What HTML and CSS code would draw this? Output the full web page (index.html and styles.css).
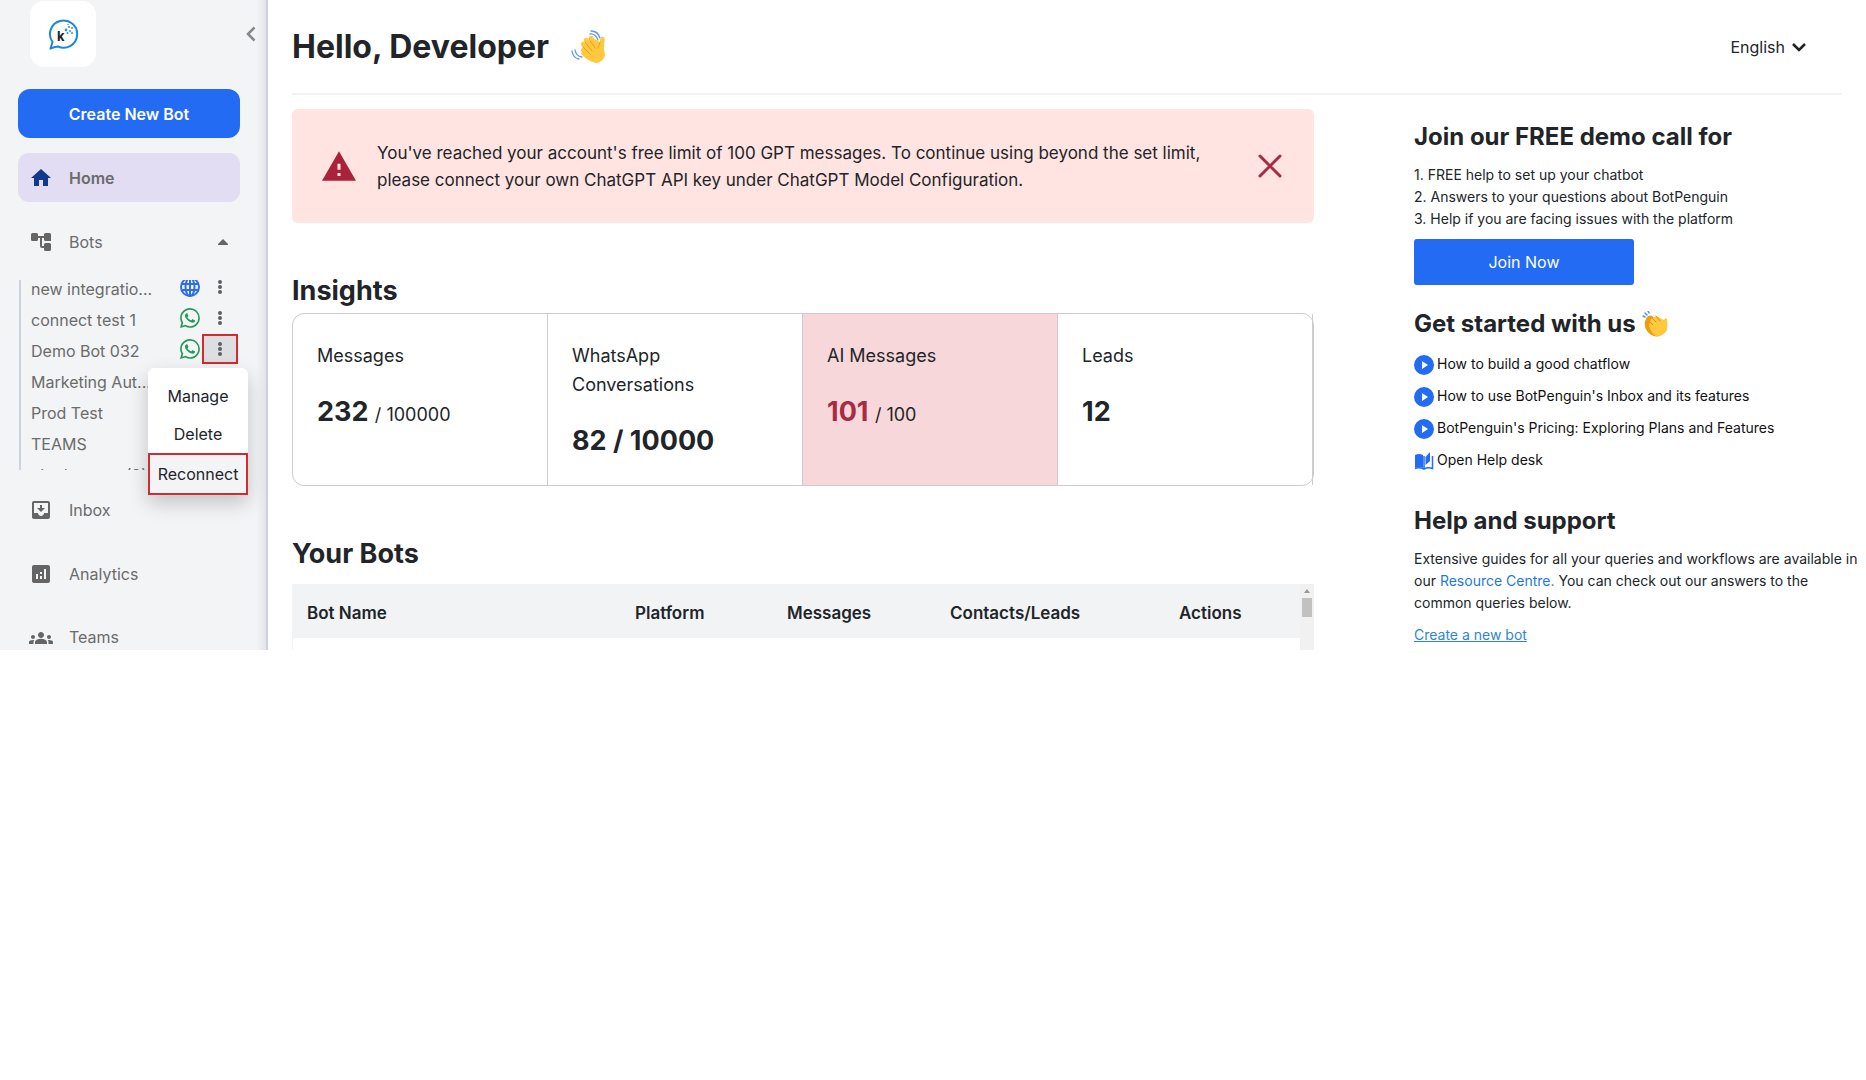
FILE: index.html
```
<!DOCTYPE html>
<html lang="en">
<head>
<meta charset="utf-8">
<meta name="viewport" content="width=device-width, initial-scale=1">
<title>Dashboard</title>
<link rel="stylesheet" href="styles.css">
</head>
<body>
<svg class="defs" aria-hidden="true">
  <symbol id="whatsapp" viewBox="0 0 16 16"><path d="M13.601 2.326A7.85 7.85 0 0 0 7.994 0C3.627 0 .068 3.558.064 7.926c0 1.399.366 2.76 1.057 3.965L0 16l4.204-1.102a7.9 7.9 0 0 0 3.79.965h.004c4.368 0 7.926-3.558 7.93-7.93A7.9 7.9 0 0 0 13.6 2.326zM7.994 14.521a6.6 6.6 0 0 1-3.356-.92l-.24-.144-2.494.654.666-2.433-.156-.251a6.56 6.56 0 0 1-1.007-3.505c0-3.626 2.957-6.584 6.591-6.584a6.56 6.56 0 0 1 4.66 1.931 6.56 6.56 0 0 1 1.928 4.66c-.004 3.639-2.961 6.592-6.592 6.592m3.615-4.934c-.197-.099-1.17-.578-1.353-.646-.182-.065-.315-.099-.445.099-.133.197-.513.646-.627.775-.114.133-.232.148-.43.05-.197-.1-.836-.308-1.592-.985-.59-.525-.985-1.175-1.103-1.372-.114-.198-.011-.304.088-.403.087-.088.197-.232.296-.346.1-.114.133-.198.198-.33.065-.134.034-.248-.015-.347-.05-.099-.445-1.076-.612-1.47-.16-.389-.323-.335-.445-.34-.114-.007-.247-.007-.38-.007a.73.73 0 0 0-.529.247c-.182.198-.691.677-.691 1.654s.71 1.916.81 2.049c.098.133 1.394 2.132 3.383 2.992.47.205.84.326 1.129.418.475.152.904.129 1.246.08.38-.058 1.171-.48 1.338-.943.164-.464.164-.86.114-.943-.049-.084-.182-.133-.38-.232"/></symbol>
  <symbol id="dots" viewBox="0 0 6 16"><circle cx="3" cy="3" r="2"/><circle cx="3" cy="8" r="2"/><circle cx="3" cy="13" r="2"/></symbol>
  <symbol id="play" viewBox="0 0 20 20"><circle cx="10" cy="10" r="10" fill="#236bf2"/><path d="M8 6v8l6-4z" fill="#fff"/></symbol>
</svg>
<div class="app">
  <aside class="sidebar">
    <div class="brand">
      <a class="logo" href="#" aria-label="Dashboard home">
        <svg width="32" height="32" viewBox="0 0 32 32">
          <path d="M3.500 30.500L5.500 24A13.600 13.600 0 1 1 11 28.500Q7 29 3.500 30.500Z" fill="#fff" stroke="#1c87d8" stroke-width="2" stroke-linejoin="round"/>
          <text x="10" y="23" class="logo-letter">k</text>
          <g fill="#2f92dd"><circle cx="19" cy="12" r="1.400"/><circle cx="22" cy="9" r="1"/><circle cx="20.500" cy="15" r="1"/><circle cx="23" cy="13" r="1"/><circle cx="25" cy="10" r="1"/><circle cx="25" cy="15" r="1"/><circle cx="21" cy="6.500" r=".7"/></g>
        </svg>
      </a>
      <button class="collapse" aria-label="Collapse sidebar"><svg width="10" height="16" viewBox="0 0 10 16"><path d="M8.500 1.500L2 8l6.500 6.500" fill="none" stroke="#85878a" stroke-width="2.500"/></svg></button>
    </div>
    <button class="create">Create New Bot</button>
    <nav class="nav">
      <a class="nav-item active" href="#"><svg viewBox="0 0 24 24"><path d="M10 20v-6h4v6h5v-8h3L12 3 2 12h3v8z"/></svg>Home</a>
      <a class="nav-item bots" href="#"><svg viewBox="0 0 24 24"><path d="M22 11V4.500Q22 3 20.500 3h-4Q15 3 15 4.500V6H9V4.500Q9 3 7.500 3h-4Q2 3 2 4.500v5Q2 11 3.500 11h4Q9 11 9 9.500V8h2v8q0 2 2 2h2v1.500q0 1.500 1.500 1.500h4q1.500 0 1.500-1.500v-5q0-1.500-1.500-1.500h-4q-1.500 0-1.500 1.500V16h-2V8h2v1.500q0 1.500 1.500 1.500z"/></svg>Bots<svg class="caret" viewBox="0 0 10 6"><path d="M0 6V5l5-5 5 5v1z"/></svg></a>
      <div class="bot-panel">
        <div class="bot-scroll">
          <ul class="bot-list">
            <li><a href="#">new integratio...</a><svg class="channel globe" viewBox="0 0 20 20"><g fill="none" stroke="#2f6fe6" stroke-width="2"><circle cx="10" cy="10" r="9"/><ellipse cx="10" cy="10" rx="4.500" ry="9"/><path d="M10 1v18M1.500 7h17M1.500 13h17"/></g></svg><button class="more" aria-label="More options"><svg viewBox="0 0 6 16"><use href="#dots"/></svg></button></li>
            <li><a href="#">connect test 1</a><svg class="channel"><use href="#whatsapp"/></svg><button class="more" aria-label="More options"><svg><use href="#dots"/></svg></button></li>
            <li><a href="#">Demo Bot 032</a><svg class="channel"><use href="#whatsapp"/></svg><button class="more open" aria-label="More options"><svg><use href="#dots"/></svg></button></li>
            <li><a href="#">Marketing Aut...</a></li>
            <li><a href="#">Prod Test</a></li>
            <li><a href="#">TEAMS</a></li>
            <li><a href="#">chatbot test (2)</a></li>
          </ul>
        </div>
        <div class="menu">
          <button>Manage</button>
          <button>Delete</button>
          <button class="marked">Reconnect</button>
        </div>
      </div>
      <a class="nav-item" href="#"><svg viewBox="0 0 24 24"><path d="M19 3H4.990c-1.110 0-1.980.9-1.980 2L3 19c0 1.100.88 2 1.990 2H19c1.100 0 2-.9 2-2V5c0-1.100-.9-2-2-2zm0 12h-4c0 1.660-1.350 3-3 3s-3-1.340-3-3H4.990V5H19v10zm-3-5h-3V7h-2v3H8l4 4 4-4z"/></svg>Inbox</a>
      <a class="nav-item" href="#"><svg viewBox="0 0 24 24"><path d="M19 3H5c-1.100 0-2 .9-2 2v14c0 1.100.9 2 2 2h14c1.100 0 2-.9 2-2V5c0-1.100-.9-2-2-2zM9 17H7v-5h2v5zm4 0h-2v-3h2v3zm0-5h-2v-2h2v2zm4 5h-2V7h2v10z"/></svg>Analytics</a>
      <a class="nav-item last" href="#"><svg viewBox="0 0 24 24"><path d="M12 12.750c1.630 0 3.070.39 4.240.9 1.080.48 1.760 1.560 1.760 2.730V18H6v-1.610c0-1.180.68-2.260 1.760-2.730 1.170-.52 2.610-.91 4.240-.91zM4 13c1.100 0 2-.9 2-2s-.9-2-2-2-2 .9-2 2 .9 2 2 2zm1.130 1.100C4.760 14.040 4.390 14 4 14c-.99 0-1.930.21-2.780.58C.48 14.900 0 15.620 0 16.430V18h4.500v-1.610c0-.83.23-1.610.63-2.290zM20 13c1.100 0 2-.9 2-2s-.9-2-2-2-2 .9-2 2 .9 2 2 2zm4 3.430c0-.81-.48-1.530-1.220-1.850C21.930 14.210 20.990 14 20 14c-.39 0-.76.04-1.130.1.4.68.63 1.460.63 2.290V18H24v-1.570zM12 6c1.660 0 3 1.340 3 3s-1.340 3-3 3-3-1.340-3-3 1.340-3 3-3z"/></svg>Teams</a>
    </nav>
  </aside>
  <main class="main">
    <header class="topbar">
      <h1>Hello, Developer</h1>
      <svg class="wave" viewBox="0 0 35 34" aria-label="Waving hand" role="img">
        <g fill="none" stroke="#5f97ee" stroke-width="1.300" stroke-linecap="round"><path d="M19 4q5-1 8 6M20 1q7 0 9 7M4 20q1 6 7 7M1 21q1 7 7 8"/></g>
        <path d="M14 14L24 9 31 14Q34 22 34 26 31 33 25 33 18 32 10 24Z" fill="#ffc83d"/>
        <g stroke="#ffc83d" stroke-width="4.500" stroke-linecap="round"><path d="M20 8l7 11M15 10l9 12M12 14l9 11M12 20l9 9M31.500 9l-1 10"/></g>
        <g stroke="#ec9f1c" stroke-width="1" stroke-linecap="round" fill="none"><path d="M18 9l6 9M14 12l7 9M12 17l7 7M29 12q-1 4-2 6"/></g>
      </svg>
      <button class="language">English<svg width="16" height="10" viewBox="0 0 16 10"><path d="M2 2l6 6 6-6" fill="none" stroke="#222" stroke-width="2.500"/></svg></button>
    </header>
    <div class="content">
      <div class="primary">
        <section class="alert" role="alert">
          <svg class="warning" viewBox="1 2 22 19"><path d="M1 21h22L12 2 1 21zm12-3h-2v-2h2v2zm0-4h-2v-4h2v4z" fill="#a92239"/></svg>
          <p>You've reached your account's free limit of 100 GPT messages. To continue using beyond the set limit, please connect your own ChatGPT API key under ChatGPT Model Configuration.</p>
          <button class="close" aria-label="Close"><svg width="24" height="24" viewBox="0 0 24 24"><path d="M2 2l20 20M22 2L2 22" stroke="#a92a43" stroke-width="3" stroke-linecap="round"/></svg></button>
        </section>
        <h2>Insights</h2>
        <section class="cards">
          <div class="card"><p>Messages</p><strong>232 <small>/ 100000</small></strong></div>
          <div class="card"><p>WhatsApp<br>Conversations</p><strong>82 / 10000</strong></div>
          <div class="card over"><p>AI Messages</p><strong>101 <small>/ 100</small></strong></div>
          <div class="card"><p>Leads</p><strong>12</strong></div>
        </section>
        <h2>Your Bots</h2>
        <div class="table-wrap">
          <table>
            <thead><tr><th>Bot Name</th><th class="platform">Platform</th><th class="messages">Messages</th><th class="contacts">Contacts/Leads</th><th class="actions">Actions</th></tr></thead>
          </table>
          <div class="scrollbar"><svg width="6" height="4" viewBox="0 0 6 4"><path d="M0 4l3-4 3 4z" fill="#999"/></svg><span class="thumb"></span></div>
        </div>
      </div>
      <aside class="secondary">
        <h3>Join our FREE demo call for</h3>
        <ol>
          <li>FREE help to set up your chatbot</li>
          <li>Answers to your questions about BotPenguin</li>
          <li>Help if you are facing issues with the platform</li>
        </ol>
        <button class="join">Join Now</button>
        <h3>Get started with us
          <svg class="clap" viewBox="0 0 26 26" aria-label="Clapping hands" role="img">
            <path d="M1 5l2 1M3 2l2 2M6 0l1 2" stroke="#4b91e8" stroke-width="1.500" stroke-linecap="round"/>
            <path d="M4 8Q6 3 10 5L20 12 18 25Q10 27 5 20 1 14 4 8Z" fill="#f19a14"/>
            <path d="M9 8Q14 3 18 7L22 9Q23 6 25 8 26 13 25 19 21 26 14 25 8 21 7 14Z" fill="#ffc83d"/>
            <path d="M10 7l4 4M14 5l4 5M7 10l4 4" stroke="#de8d13" stroke-width="1" stroke-linecap="round"/>
          </svg>
        </h3>
        <ul class="guides">
          <li><svg><use href="#play"/></svg><a href="#">How to build a good chatflow</a></li>
          <li><svg><use href="#play"/></svg><a href="#">How to use BotPenguin's Inbox and its features</a></li>
          <li><svg><use href="#play"/></svg><a href="#">BotPenguin's Pricing: Exploring Plans and Features</a></li>
          <li><svg viewBox="0 0 20 20"><path d="M1 4Q5 2 9 4V17Q5 15 1 17Z" fill="#236bf2"/><path d="M1 17.500Q5 16 10 18 14 16 18.500 17.500V5M10 5v13" fill="none" stroke="#236bf2" stroke-width="1.500"/><path d="M11.500 6L16 1V10l-4.500 4Z" fill="#236bf2"/></svg><a href="#">Open Help desk</a></li>
        </ul>
        <h3>Help and support</h3>
        <p>Extensive guides for all your queries and workflows are available in our <a href="#">Resource Centre.</a> You can check out our answers to the common queries below.</p>
        <a class="create-link" href="#">Create a new bot</a>
      </aside>
    </div>
  </main>
</div>
</body>
</html>
```
FILE: styles.css
```
* { box-sizing: border-box; }
body { margin: 0; background: #fff; color: #212529; font-family: "Inter", "Liberation Sans", sans-serif; font-size: 14px; }
h1, h2, h3, p, ol, ul { margin: 0; padding: 0; }
ol, ul { list-style: none; }
button { font: inherit; color: inherit; border: 0; background: none; padding: 0; cursor: pointer; }
a { text-decoration: none; color: inherit; }
svg { display: block; flex: none; }
.defs { display: none; }

.app { display: flex; }

/* Sidebar */
.sidebar { flex: none; width: 268px; padding: 1px 26px 0 18px; color: #6b6b6b; font-size: 16px;
  background: linear-gradient(to left, #e3e5ea, #f2f4f6 10px); border-right: 2px solid #cbd0dc; }
.brand { display: flex; justify-content: space-between; padding-left: 12px; margin-right: -16px; }
.logo { width: 66px; height: 66px; border-radius: 14px; background: #fff; display: grid; place-items: center; }
.logo-letter { font: 700 13px "Inter", sans-serif; fill: #222; }
.create { display: block; width: 100%; height: 49px; margin: 22px 0 15px; border-radius: 12px; background: #236bf2; color: #fff; font-weight: 600; }
.nav-item { display: flex; align-items: center; gap: 16px; height: 49px; padding: 0 12px 0 11px; margin-bottom: 15px; border-radius: 11px; }
.nav-item svg { width: 24px; height: 24px; fill: #656565; }
.nav-item.active { background: #e2ddf2; font-weight: 600; }
.nav-item.active svg { fill: #123a8c; }
.nav-item .caret { width: 10px; height: 6px; margin-left: auto; }
.nav-item.bots { margin-bottom: 14px; }
.nav-item.last { height: 37px; margin: 0; align-items: flex-end; line-height: 26px; }

.bot-panel { position: relative; margin: 0 0 15px 1px; }
.bot-scroll { height: 190px; overflow: hidden; border-left: 2px solid #cbd3e0; padding-left: 10px; }
.bot-list { margin-top: -7px; }
.bot-list li { display: flex; align-items: center; height: 31px; }
.bot-list a { flex: 1; }
.channel { width: 20px; height: 20px; fill: #269a5c; margin-bottom: 4px; }
.more { display: grid; place-items: center; width: 36px; height: 30px; margin: 0 2px 4px; border: 2px solid transparent; }
.more svg { width: 6px; height: 16px; fill: #5f5f5f; }
.more.open { border-color: #d02c31; background: #dddee2; }
.menu { position: absolute; left: 129px; top: 88px; width: 100px; padding-top: 9px; border-radius: 6px 6px 0 0; background: #fff; color: #212529; box-shadow: 0 8px 20px rgba(0, 0, 0, .2); }
.menu button { display: block; width: 100%; height: 38px; }
.menu .marked { height: 42px; border: 2px solid #d02c31; background: #f2f4f6; }

/* Main column */
.main { flex: 1; min-width: 0; padding-left: 24px; display: flex; flex-direction: column; }
.topbar { display: flex; align-items: center; height: 95px; margin-right: 24px; border-bottom: 2px solid #f1f3f5; }
h1 { font-size: 32px; line-height: 40px; }
.wave { width: 35px; height: 34px; margin-left: 22px; }
.language { display: flex; align-items: center; gap: 6px; margin-left: auto; margin-right: 35px; font-size: 16px; }
.content { flex: 1; display: grid; grid-template-columns: minmax(0, 1022fr) minmax(0, 452fr); gap: 100px; padding-top: 14px; }
.primary { display: flex; flex-direction: column; }

.alert { display: flex; align-items: center; height: 114px; padding: 0 32px 0 30px; border-radius: 6px; background: #ffe4e1; }
.warning { width: 34px; height: 30px; margin-right: 21px; }
.alert p { flex: 1; padding-top: 2px; font-size: 17px; line-height: 27px; }
.close { margin-left: 24px; }

h2 { font-size: 27px; line-height: 32px; margin: 52px 0 6px; }
h2 ~ h2 { margin-bottom: 14px; }
.cards { display: grid; grid-template-columns: repeat(4, 1fr); border: 1px solid #ccc; border-radius: 12px; }
.card { padding: 27px 24px 28px; border-right: 1px solid #ccc; }
.card p { font-size: 18px; line-height: 29px; margin-bottom: 26px; }
.card strong { display: block; font-size: 27px; line-height: 32px; }
.card small { font-size: 18px; font-weight: 400; color: #212529; }
.card.over { background: #f8d7da; }
.card.over strong { color: #a92a43; }

.table-wrap { flex: 1; display: flex; border-left: 1px solid #f2f3f5; }
table { flex: 1; border-collapse: collapse; table-layout: fixed; align-self: flex-start; }
th { height: 54px; padding: 4px 0 0 14px; background: #f2f3f5; text-align: left; font-size: 17px; font-weight: 600; }
.platform { width: 152px; }
.messages { width: 163px; }
.contacts { width: 229px; }
.actions { width: 135px; }
.scrollbar { width: 14px; padding-top: 5px; background: #f1f1f1; display: flex; flex-direction: column; align-items: center; gap: 5px; }
.thumb { width: 10px; height: 19px; background: #c1c1c1; }

/* Help column */
.secondary { padding-top: 13px; line-height: 22px; }
h3 { display: flex; align-items: center; gap: 6px; font-size: 24px; line-height: 30px; }
ol { margin: 12px 0 9px; counter-reset: step; }
ol li { counter-increment: step; }
ol li::before { content: counter(step) ". "; }
.join { width: 220px; height: 46px; margin-bottom: 24px; border-radius: 3px; background: #236bf2; color: #fff; font-size: 16px; }
.clap { width: 26px; height: 26px; }
.guides { margin: 9px 0 30px; }
.guides li { display: flex; align-items: center; gap: 3px; height: 32px; color: #111; }
.guides svg { width: 20px; height: 20px; margin-top: 2px; }
.secondary p { margin: 12px 0 10px; }
.secondary p a { color: #1f78e0; }
.create-link { color: #2c86d6; text-decoration: underline; }
```
